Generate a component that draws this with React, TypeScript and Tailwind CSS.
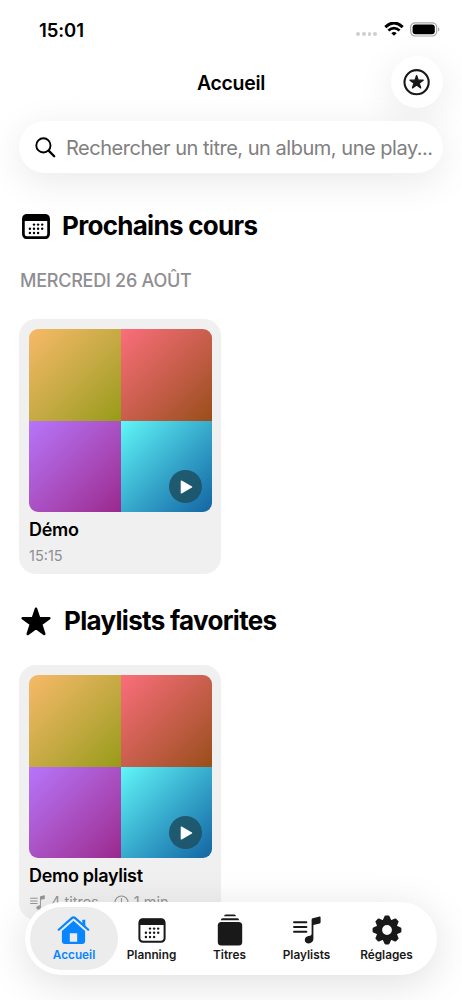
import type { ReactNode } from "react";

type IconProps = { className?: string };

function CalendarIcon({ className, bold = false }: IconProps & { bold?: boolean }) {
  const dots = [
    [12, 10.6], [16.1, 10.6], [20.2, 10.6],
    [7.9, 14.8], [12, 14.8], [16.1, 14.8], [20.2, 14.8],
    [7.9, 19], [12, 19], [16.1, 19],
  ];
  return (
    <svg viewBox="0 0 28 25" className={className} fill="currentColor">
      <rect x="1.4" y="1.3" width="25.2" height="22.4" rx="3.4" fill="none" stroke="currentColor" strokeWidth={bold ? 2.7 : 2} />
      <path d="M1 7V4.3A3.5 3.5 0 0 1 4.5.8h19A3.5 3.5 0 0 1 27 4.3V7Z" />
      {dots.map(([x, y]) => (
        <circle key={`${x}-${y}`} cx={x} cy={y} r="1.2" />
      ))}
    </svg>
  );
}

function StarIcon({ className }: IconProps) {
  return (
    <svg viewBox="0 0 30 29" className={className} fill="currentColor" stroke="currentColor" strokeWidth="2.6" strokeLinejoin="round">
      <path d="M15 1.8 18.1 11.2H28.3L20.1 17.2 23.2 26.9 15 21 6.8 26.9 9.9 17.2 1.7 11.2H11.9Z" />
    </svg>
  );
}

function HomeIcon({ className }: IconProps) {
  return (
    <svg viewBox="0 0 33 30" className={className} fill="currentColor">
      <path d="M1.7 14.7 14.8 3.1Q16.5 1.6 18.2 3.1L31.3 14.7" fill="none" stroke="currentColor" strokeWidth="2.2" strokeLinecap="round" />
      <path d="M25.3 4.7h3v7.6l-3-2.7Z" />
      <path fillRule="evenodd" d="M16.5 5.8 28.1 16.1V26a3 3 0 0 1-3 3H7.9a3 3 0 0 1-3-3V16.1ZM12.8 18.2V26.8H20.2V18.2Z" />
    </svg>
  );
}

function StackIcon({ className }: IconProps) {
  return (
    <svg viewBox="0 0 26 32" className={className} fill="currentColor">
      <path d="M7 2.3Q7.2.6 8.8.6H17.2Q18.8.6 19 2.3Z" />
      <path d="M3.8 6.2Q4 4.3 5.7 4.3H20.3Q22 4.3 22.2 6.2Z" />
      <rect x="0.8" y="8" width="24.4" height="23.6" rx="3.6" />
    </svg>
  );
}

function MusicListIcon({ className }: IconProps) {
  return (
    <svg viewBox="0 0 28 28" className={className} fill="currentColor">
      <path d="M1 6.2H13.4M1 11H13.4M1 15.8H13.4" fill="none" stroke="currentColor" strokeWidth="1.9" strokeLinecap="round" />
      <path d="M18.6 3.8Q18.6 2.6 19.8 2.3L26.6.6Q27.6.4 27.6 1.4V6.2Q27.6 7.1 26.7 7.4L20.4 8.9V22.8C20.4 25.6 18.3 27.4 15.7 27.4 13.4 27.4 11.8 26 11.8 23.9 11.8 21.7 13.4 20.4 15.5 20L17.2 19.7Q18.6 19.4 18.6 18.1Z" />
    </svg>
  );
}

function GearIcon({ className }: IconProps) {
  return (
    <svg viewBox="-15 -15 30 30" className={className} fill="currentColor">
      {[0, 45, 90, 135, 180, 225, 270, 315].map((angle) => (
        <path key={angle} transform={`rotate(${angle})`} d="M-4.6-9-2.9-12.7-2.6-13.6Q-2.3-14.4-1.5-14.4H1.5Q2.3-14.4 2.6-13.6L2.9-12.7 4.6-9Z" />
      ))}
      <circle r="7.8" fill="none" stroke="currentColor" strokeWidth="5.8" />
    </svg>
  );
}

function ClockIcon({ className }: IconProps) {
  return (
    <svg viewBox="0 0 16 16" className={className} fill="none" stroke="currentColor" strokeWidth="1.2" strokeLinecap="round">
      <circle cx="8" cy="8" r="7" />
      <path d="M8 3.8V8.5H4.8" />
    </svg>
  );
}

function StatusBar() {
  return (
    <div className="flex h-14 items-start justify-between pt-[18px] pr-[22px] pl-[39px]">
      <span className="text-[18.5px] leading-6 font-semibold tracking-[-0.1px]">15:01</span>
      <div className="flex h-[23px] items-center">
        <div className="mt-[9px] mr-[7px] flex gap-[1.8px]">
          {[0, 1, 2, 3].map((dot) => (
            <span key={dot} className="size-[3.8px] rounded-full bg-[#cfcfcf]" />
          ))}
        </div>
        <svg viewBox="0 0 20 15" className="mr-[6px] h-[15px] w-5" fill="none" stroke="black">
          <path d="M1.3 5.1Q10-3.2 18.7 5.1" strokeWidth="2.9" />
          <path d="M4.4 8.6Q10 3.6 15.6 8.6" strokeWidth="2.7" />
          <path d="M10 13.8 7.3 11.2Q10 9 12.7 11.2Z" fill="black" stroke="none" />
        </svg>
        <svg viewBox="0 0 30 15" className="h-[15px] w-[30px]">
          <rect x="0.7" y="0.8" width="26" height="13.2" rx="4.4" fill="none" stroke="#a8a8a8" strokeWidth="1.2" />
          <rect x="2.6" y="2.6" width="22.2" height="9.6" rx="2.9" fill="black" />
          <path d="M28 5.2Q29.4 5.9 29.4 7.4T28 9.6Z" fill="#a8a8a8" />
        </svg>
      </div>
    </div>
  );
}

function SectionTitle({ icon, children }: { icon: ReactNode; children: ReactNode }) {
  return (
    <h2 className="flex h-8 items-center text-[26px] leading-8 font-bold tracking-[-0.7px]">
      {icon}
      {children}
    </h2>
  );
}

function PlaylistCard({ title, meta }: { title: string; meta: ReactNode }) {
  return (
    <article className="h-[255px] w-[202px] rounded-[17px] bg-[#f0f0f0] px-[10px] pt-[10px]">
      <div className="relative grid size-[183px] grid-cols-[92px_91px] grid-rows-[92px_91px] overflow-hidden rounded-[9px]">
        <div className="bg-linear-135 from-[#f8b968] to-[#979b13]" />
        <div className="bg-linear-135 from-[#fb6e7b] to-[#9a4e16]" />
        <div className="bg-linear-135 from-[#b675fb] to-[#9b278e]" />
        <div className="bg-linear-135 from-[#61f6f8] to-[#1565a2]" />
        <button type="button" aria-label="Lire" className="absolute right-[10px] bottom-[9px] flex size-[33px] items-center justify-center rounded-full bg-[#1d5367]/90">
          <svg viewBox="0 0 13 15" className="ml-[2px] h-[14px] w-[13px]" fill="white" stroke="white" strokeWidth="1.4" strokeLinejoin="round">
            <path d="M1 1.2 12 7.5 1 13.8Z" />
          </svg>
        </button>
      </div>
      <h3 className="mt-[6px] text-[18px] leading-6 font-semibold tracking-[-0.3px]">{title}</h3>
      <div className="mt-[4px] flex h-5 items-center text-[14.5px] leading-5 text-[#8e8e93]">{meta}</div>
    </article>
  );
}

const TABS = [
  { label: "Accueil", icon: <HomeIcon className="mr-[2px] h-[30px] w-[33px]" />, width: "w-[88px]" },
  { label: "Planning", icon: <CalendarIcon className="h-[25px] w-7" />, width: "w-[67px]" },
  { label: "Titres", icon: <StackIcon className="h-8 w-[26px]" />, width: "w-[89px]" },
  { label: "Playlists", icon: <MusicListIcon className="h-7 w-7" />, width: "w-[65px]" },
  { label: "Réglages", icon: <GearIcon className="h-[30px] w-[30px]" />, width: "w-[95px]" },
];

function TabBar() {
  return (
    <nav className="absolute top-[901.5px] left-[25px] flex h-[73.5px] w-[412px] rounded-full bg-white pt-[5px] pl-[5px] shadow-[0_8px_42px_rgba(0,0,0,0.13)]">
      {TABS.map((tab, index) => (
        <button
          key={tab.label}
          type="button"
          className={`flex h-[63px] shrink-0 flex-col items-center rounded-full ${tab.width} ${
            index === 0 ? "bg-[#ececec] text-[#0786ff]" : "text-[#191919]"
          }`}
        >
          <span className="flex h-[47px] items-center justify-center">{tab.icon}</span>
          <span className="-mt-[7px] text-[11.8px] leading-4 font-semibold">{tab.label}</span>
        </button>
      ))}
    </nav>
  );
}

export default function App() {
  return (
    <div className="relative h-[1000px] w-[462px] overflow-hidden bg-white font-[Inter,sans-serif] whitespace-nowrap text-black">
      <StatusBar />

      <header className="grid h-[52px] grid-cols-[1fr_auto_1fr] items-center pr-[19px] pl-[19px]">
        <h1 className="col-start-2 pt-[3px] text-[19.5px] font-semibold tracking-[-0.3px]">Accueil</h1>
        <button type="button" aria-label="Favoris" className="flex size-[52px] items-center justify-center justify-self-end rounded-full bg-white shadow-[0_8px_38px_rgba(0,0,0,0.09)]">
          <svg viewBox="0 0 28 28" className="size-7 text-[#191919]" fill="none" stroke="currentColor">
            <circle cx="13.6" cy="14.2" r="12.1" strokeWidth="2.1" />
            <path d="M13.6 7.5 15.2 12.2H20.2L16.2 15.1 17.7 19.9 13.6 17 9.5 19.9 11 15.1 7 12.2H12Z" fill="currentColor" strokeWidth="1.3" strokeLinejoin="round" />
          </svg>
        </button>
      </header>

      <div className="relative mx-[19px] mt-[13px] flex h-[52px] items-center rounded-full bg-white pl-4 shadow-[0_8px_38px_rgba(0,0,0,0.09)]">
        <svg viewBox="0 0 21 21" className="mr-[10px] size-[21px]" fill="none" stroke="black" strokeWidth="1.9" strokeLinecap="round">
          <circle cx="8.4" cy="8.4" r="7.1" />
          <path d="m13.6 13.6 5.6 5.6" strokeWidth="2.3" />
        </svg>
        <span className="pt-px text-[20px] tracking-[-0.48px] text-[#808080]">Rechercher un titre, un album, une play...</span>
      </div>

      <main className="px-[19px]">
        <section className="pt-[37px]">
          <SectionTitle icon={<CalendarIcon bold className="mr-[12px] ml-[3px] h-[25px] w-7" />}>Prochains cours</SectionTitle>
          <p className="mt-[27px] pl-px text-[18px] leading-6 font-medium tracking-[-0.25px] text-[#8e8e93]">MERCREDI 26 AOÛT</p>
          <div className="mt-[26px]">
            <PlaylistCard title="Démo" meta="15:15" />
          </div>
        </section>

        <section className="pt-[31px]">
          <SectionTitle icon={<StarIcon className="mr-[13px] ml-[2px] h-[29px] w-[30px]" />}>Playlists favorites</SectionTitle>
          <div className="mt-[28px]">
            <PlaylistCard
              title="Demo playlist"
              meta={
                <>
                  <MusicListIcon className="mr-[6px] ml-[1px] size-[15px]" />
                  <span>4 titres</span>
                  <ClockIcon className="mr-[5px] ml-[15px] size-[15px]" />
                  <span>1 min</span>
                </>
              }
            />
          </div>
        </section>
      </main>

      <div className="pointer-events-none absolute inset-x-0 bottom-0 h-[112px] bg-linear-to-b from-white/0 to-white/60" />
      <TabBar />
    </div>
  );
}
